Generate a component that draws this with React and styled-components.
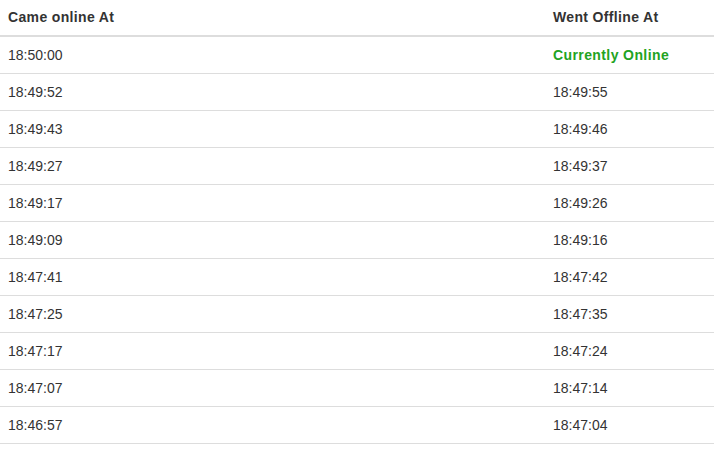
import React from "react";
import styled, { createGlobalStyle } from "styled-components";

const GlobalStyle = createGlobalStyle`
  html, body {
    margin: 0;
    padding: 0;
    background: #fff;
  }
  body {
    font-family: "Liberation Sans", Arial, Helvetica, sans-serif;
    font-size: 14px;
    line-height: 20px;
    color: #333;
  }
`;

const Table = styled.table`
  width: 100%;
  border-collapse: collapse;
  border-spacing: 0;
  border-bottom: 1px solid #ddd;
`;

const Th = styled.th`
  text-align: left;
  font-weight: bold;
  letter-spacing: 0.35px;
  padding: 7px 8px 8px;
  height: 20px;
  vertical-align: bottom;
  border-bottom: 2px solid #ddd;
  width: ${(p) => p.width || "auto"};
`;

const Td = styled.td`
  padding: 8px;
  height: 20px;
  border-top: 1px solid #ddd;
  vertical-align: top;
`;

const Online = styled.span`
  color: #22a322;
  font-weight: bold;
  letter-spacing: 0.4px;
`;

const rows = [
  ["18:50:00", null],
  ["18:49:52", "18:49:55"],
  ["18:49:43", "18:49:46"],
  ["18:49:27", "18:49:37"],
  ["18:49:17", "18:49:26"],
  ["18:49:09", "18:49:16"],
  ["18:47:41", "18:47:42"],
  ["18:47:25", "18:47:35"],
  ["18:47:17", "18:47:24"],
  ["18:47:07", "18:47:14"],
  ["18:46:57", "18:47:04"],
];

const App = () => {
  return (
    <>
      <GlobalStyle />
      <Table>
        <thead>
          <tr>
            <Th width="529px">Came online At</Th>
            <Th>Went Offline At</Th>
          </tr>
        </thead>
        <tbody>
          {rows.map(([on, off]) => (
            <tr key={on}>
              <Td>{on}</Td>
              <Td>{off ? off : <Online>Currently Online</Online>}</Td>
            </tr>
          ))}
        </tbody>
      </Table>
    </>
  );
};

export default App;
